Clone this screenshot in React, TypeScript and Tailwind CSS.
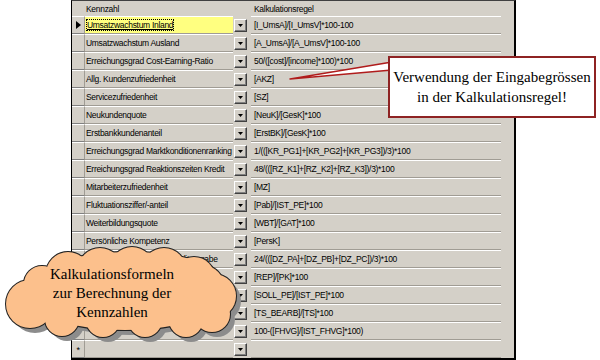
import React from "react";

type Row = { name: string; rule: string };

// names of rows 15-18 sit fully under the cloud in the picture
const rows: Row[] = [
  { name: "Umsatzwachstum Inland", rule: "[I_UmsA]/[I_UmsV]*100-100" },
  { name: "Umsatzwachstum Ausland", rule: "[A_UmsA]/[A_UmsV]*100-100" },
  { name: "Erreichungsgrad Cost-Earning-Ratio", rule: "50/([cost]/[income]*100)*100" },
  { name: "Allg. Kundenzufriedenheit", rule: "[AKZ]" },
  { name: "Servicezufriedenheit", rule: "[SZ]" },
  { name: "Neukundenquote", rule: "[NeuK]/[GesK]*100" },
  { name: "Erstbankkundenanteil", rule: "[ErstBK]/[GesK]*100" },
  { name: "Erreichungsgrad Marktkonditionenranking", rule: "1/(([KR_PG1]+[KR_PG2]+[KR_PG3])/3)*100" },
  { name: "Erreichungsgrad Reaktionszeiten Kredit", rule: "48/(([RZ_K1]+[RZ_K2]+[RZ_K3])/3)*100" },
  { name: "Mitarbeiterzufriedenheit", rule: "[MZ]" },
  { name: "Fluktuationsziffer/-anteil", rule: "[Pab]/[IST_PE]*100" },
  { name: "Weiterbildungsquote", rule: "[WBT]/[GAT]*100" },
  { name: "Persönliche Kompetenz", rule: "[PersK]" },
  { name: "Durchlaufzeiten bei der Kreditvergabe", rule: "24/(([DZ_PA]+[DZ_PB]+[DZ_PC])/3)*100" },
  { name: "", rule: "[REP]/[PK]*100" },
  { name: "", rule: "[SOLL_PE]/[IST_PE]*100" },
  { name: "", rule: "[TS_BEARB]/[TS]*100" },
  { name: "", rule: "100-([FHVG]/[IST_FHVG]*100)" },
  { name: "", rule: "" },
];

// cloud bumps, relative to the svg origin (0,240)
const bumps = [
  { cx: 30, cy: 64, r: 24 },
  { cx: 42, cy: 44, r: 18 },
  { cx: 68, cy: 34, r: 22 },
  { cx: 100, cy: 30, r: 22 },
  { cx: 132, cy: 29, r: 22 },
  { cx: 164, cy: 30, r: 22 },
  { cx: 194, cy: 38, r: 21 },
  { cx: 214, cy: 56, r: 22 },
  { cx: 212, cy: 74, r: 18 },
  { cx: 186, cy: 80, r: 17 },
  { cx: 145, cy: 80, r: 17 },
  { cx: 103, cy: 80, r: 17 },
  { cx: 62, cy: 79, r: 17 },
];

const Cloud = ({ fill, stroke, dx = 0, dy = 0 }: { fill: string; stroke?: string; dx?: number; dy?: number }) => (
  <g transform={`translate(${dx} ${dy})`} fill={fill} stroke={stroke ?? "none"} strokeWidth={stroke ? 2 : 0}>
    <ellipse cx={125} cy={55} rx={100} ry={35} />
    <ellipse cx={130} cy={40} rx={92} ry={28} />
    {bumps.map((b, i) => (
      <circle key={i} cx={b.cx} cy={b.cy} r={b.r} />
    ))}
  </g>
);

const DropButton = () => (
  <div className="w-[13px] h-[13px] bg-[#d4d0c8] border-t border-l border-t-white border-l-white border-r border-b border-r-[#404040] border-b-[#404040] flex items-center justify-center shadow-[inset_-1px_-1px_0_#808080]">
    <svg width="5" height="3" viewBox="0 0 5 3">
      <polygon points="0,0 5,0 2.5,3" fill="#000" />
    </svg>
  </div>
);

export default function App() {
  return (
    <div className="relative w-[600px] h-[360px] bg-white overflow-hidden font-['Liberation_Sans',Arial,sans-serif] text-[8.5px] tracking-[-0.3px] text-black">
      {/* grid */}
      <div className="ml-[71px] w-[445px] h-[360px] bg-[#d4d0c8] border-t border-t-[#404040] border-l border-l-black border-r-2 border-r-black border-b-2 border-b-black flex flex-col">
        <div className="h-[15px] flex items-center shrink-0 pt-[2px]">
          <div className="w-[13px]" />
          <div className="w-[148px] pl-[1px]">Kennzahl</div>
          <div className="w-[18px]" />
          <div className="w-[250px] pl-[3px]">Kalkulationsregel</div>
        </div>
        {rows.map((row, i) => (
          <div key={i} className="h-[18px] flex items-center shrink-0">
            <div className="w-[13px] h-full border-t border-t-white border-b border-b-[#808080] border-r border-r-[#a09c94] flex items-center justify-center">
              {i === 0 && (
                <svg width="5" height="8" viewBox="0 0 5 8">
                  <polygon points="0,0 5,4 0,8" fill="#000" />
                </svg>
              )}
              {i === rows.length - 1 && <span className="text-[9px] leading-none mt-[2px]">*</span>}
            </div>
            <div
              className={`w-[148px] h-full border-t border-t-white border-b border-b-[#a09c94] flex items-center pl-[1px] whitespace-nowrap overflow-hidden ${
                i === 0 ? "bg-[#ffff80]" : ""
              }`}
            >
              {i === 0 ? (
                <span className="border border-dotted border-black leading-[10px] underline">{row.name}</span>
              ) : (
                row.name
              )}
            </div>
            <div className="ml-[1px] mr-[4px]">
              <DropButton />
            </div>
            <div className="w-[250px] h-full border-t border-t-white border-b border-b-[#a09c94] flex items-center pl-[3px] whitespace-nowrap overflow-hidden">
              {row.rule}
            </div>
          </div>
        ))}
      </div>

      {/* callout pointer */}
      <svg className="absolute left-0 top-0" width="600" height="360">
        <polygon points="290,79 392,62 392,70" fill="#fff" stroke="#b01c1c" strokeWidth="1.5" strokeLinejoin="round" />
      </svg>

      {/* callout box */}
      <div className="absolute left-[388px] top-[56px] w-[208px] h-[62px] bg-white border-2 border-[#8e2323] flex flex-col items-center justify-center font-['Liberation_Serif','Times_New_Roman',serif] text-[15px] leading-[20px] tracking-normal text-black">
        <div>Verwendung der Eingabegrössen</div>
        <div>in der Kalkulationsregel!</div>
      </div>

      {/* cloud */}
      <svg className="absolute left-0 top-[240px]" width="260" height="120">
        <Cloud fill="#8c8c8c" dx={5} dy={5} />
        <Cloud fill="#fcc08c" stroke="#222" />
        <Cloud fill="#fcc08c" />
      </svg>
      <div className="absolute left-[12px] top-[265px] w-[200px] flex flex-col items-center font-['Liberation_Serif','Times_New_Roman',serif] text-[15px] leading-[19px] tracking-normal text-black">
        <div>Kalkulationsformeln</div>
        <div>zur Berechnung der</div>
        <div>Kennzahlen</div>
      </div>
    </div>
  );
}
